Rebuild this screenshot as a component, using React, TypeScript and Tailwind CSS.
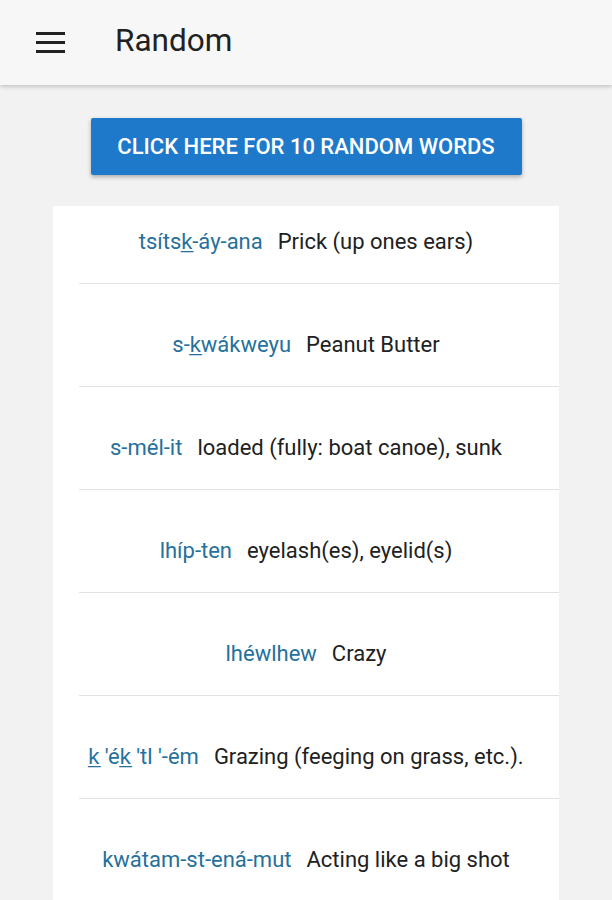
const words = [
  { word: 'tsítsk̲-áy-ana', meaning: 'Prick (up ones ears)' },
  { word: 's-k̲wákweyu', meaning: 'Peanut Butter' },
  { word: 's-mél-it', meaning: 'loaded (fully: boat canoe), sunk' },
  { word: 'lhíp-ten', meaning: 'eyelash(es), eyelid(s)' },
  { word: 'lhéwlhew', meaning: 'Crazy' },
  { word: "k̲ 'ék̲ 'tl '-ém", meaning: 'Grazing (feeging on grass, etc.).' },
  { word: 'kwátam-st-ená-mut', meaning: 'Acting like a big shot' },
]

export default function App() {
  return (
    <div className="min-h-[900px] bg-[#f2f2f2] font-['Roboto',sans-serif] overflow-hidden">
      {/* Header */}
      <div className="h-[85px] bg-[#f7f7f7] flex items-center shadow-[0_2px_4px_rgba(0,0,0,0.18)] relative">
        <svg className="ml-[36px] w-[29px] h-[21px]" viewBox="0 0 29 21">
          <rect x="0" y="0" width="29" height="3" fill="#212121" />
          <rect x="0" y="9" width="29" height="3" fill="#212121" />
          <rect x="0" y="18" width="29" height="3" fill="#212121" />
        </svg>
        <h1 className="ml-[50px] text-[31.5px] text-[#212121] leading-none -mt-[4px]">Random</h1>
      </div>

      {/* Button */}
      <div className="pt-[33px] flex justify-center">
        <button className="w-[431px] h-[57px] bg-[#1f79cb] rounded-[2px] text-white text-[22px] font-medium shadow-[0_2px_4px_rgba(0,0,0,0.3)]">
          CLICK HERE FOR 10 RANDOM WORDS
        </button>
      </div>

      {/* Word list */}
      <div className="mt-[31px] mx-auto w-[506px] bg-white">
        {words.map((w, i) => (
          <div key={i}>
            <div className={`flex justify-center items-center gap-[15px] pb-[29px] text-[22px] leading-6 ${i === 0 ? 'pt-[24px]' : 'pt-[49px]'}`}>
              <span className="text-[#26709c]">{w.word}</span>
              <span className="text-[#212121]">{w.meaning}</span>
            </div>
            <div className="ml-[26px] h-px bg-[#e2e2e2]" />
          </div>
        ))}
      </div>
    </div>
  )
}
